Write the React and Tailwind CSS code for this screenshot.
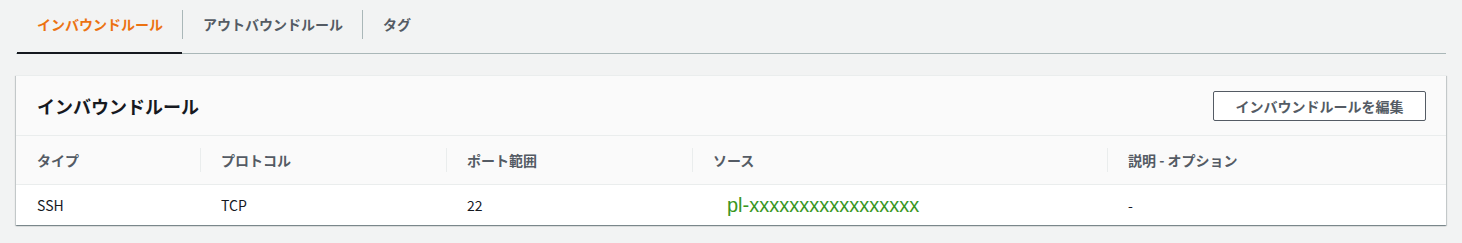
import React from "react";

const jp = { fontFamily: '"Noto Sans CJK JP", "Noto Sans", sans-serif' };

const columns = ["タイプ", "プロトコル", "ポート範囲", "ソース", "説明 - オプション"];

function Tab({ label, active }) {
    return (
        <div
            className={
                "flex items-start pl-[20px] pr-[19px] pt-[14px] text-[14px] leading-5 font-bold " +
                (active ? "text-[#ec7211] border-b-2 border-[#16191f] -mb-px" : "text-[#545b64]")
            }
        >
            {label}
        </div>
    );
}

function Sep() {
    return <div className="w-px h-[29px] mt-[10px] bg-[#aab7b8]" />;
}

function Cell({ first, children, className = "" }) {
    return (
        <div className="flex items-center">
            {!first && <div className="w-px h-[24px] bg-[#eaeded]" />}
            <div className={(first ? "pl-[21px] " : "pl-[20px] ") + className}>{children}</div>
        </div>
    );
}

function Plain({ children, className = "" }) {
    return <div className={"flex items-center pl-[21px] " + className}>{children}</div>;
}

export default function App() {
    return (
        <div className="min-h-[243px] bg-[#f2f3f3] px-4" style={jp}>
            <div className="flex h-[54px] border-b border-[#aab7b8] pl-px">
                <Tab label="インバウンドルール" active />
                <Sep />
                <Tab label="アウトバウンドルール" />
                <Sep />
                <Tab label="タグ" />
            </div>

            <div className="mt-[21px] bg-white border-t border-[#eaeded] shadow-[0_1px_1px_0_rgba(0,28,36,0.3),1px_1px_1px_0_rgba(0,28,36,0.15),-1px_1px_1px_0_rgba(0,28,36,0.15)]">
                <div className="flex items-center justify-between h-[60px] pl-[21px] pr-[20px] bg-[#fafafa] border-b border-[#eaeded]">
                    <h2 className="text-[18px] leading-6 font-bold text-[#16191f]">インバウンドルール</h2>
                    <button className="w-[213px] h-[30px] mt-[1px] bg-white border border-[#545b64] rounded-[2px] text-[14px] font-bold text-[#545b64]">
                        インバウンドルールを編集
                    </button>
                </div>

                <div className="grid grid-cols-[184px_246px_246px_415px_1fr] h-[49px] bg-[#fafafa] border-b border-[#eaeded] text-[14px] font-bold text-[#545b64]">
                    {columns.map((c, i) => (
                        <Cell key={c} first={i === 0}>{c}</Cell>
                    ))}
                </div>

                <div className="grid grid-cols-[184px_246px_246px_415px_1fr] h-[40px] text-[14px] text-[#16191f]">
                    <Plain>SSH</Plain>
                    <Plain>TCP</Plain>
                    <Plain>22</Plain>
                    <Plain className="pl-[35px]">
                        <span className="text-[20px] leading-6 text-[#3a961e]" style={{ fontFamily: '"Liberation Sans", Arial, sans-serif' }}>
                            pl-xxxxxxxxxxxxxxxxx
                        </span>
                    </Plain>
                    <Plain>-</Plain>
                </div>
            </div>
        </div>
    );
}
